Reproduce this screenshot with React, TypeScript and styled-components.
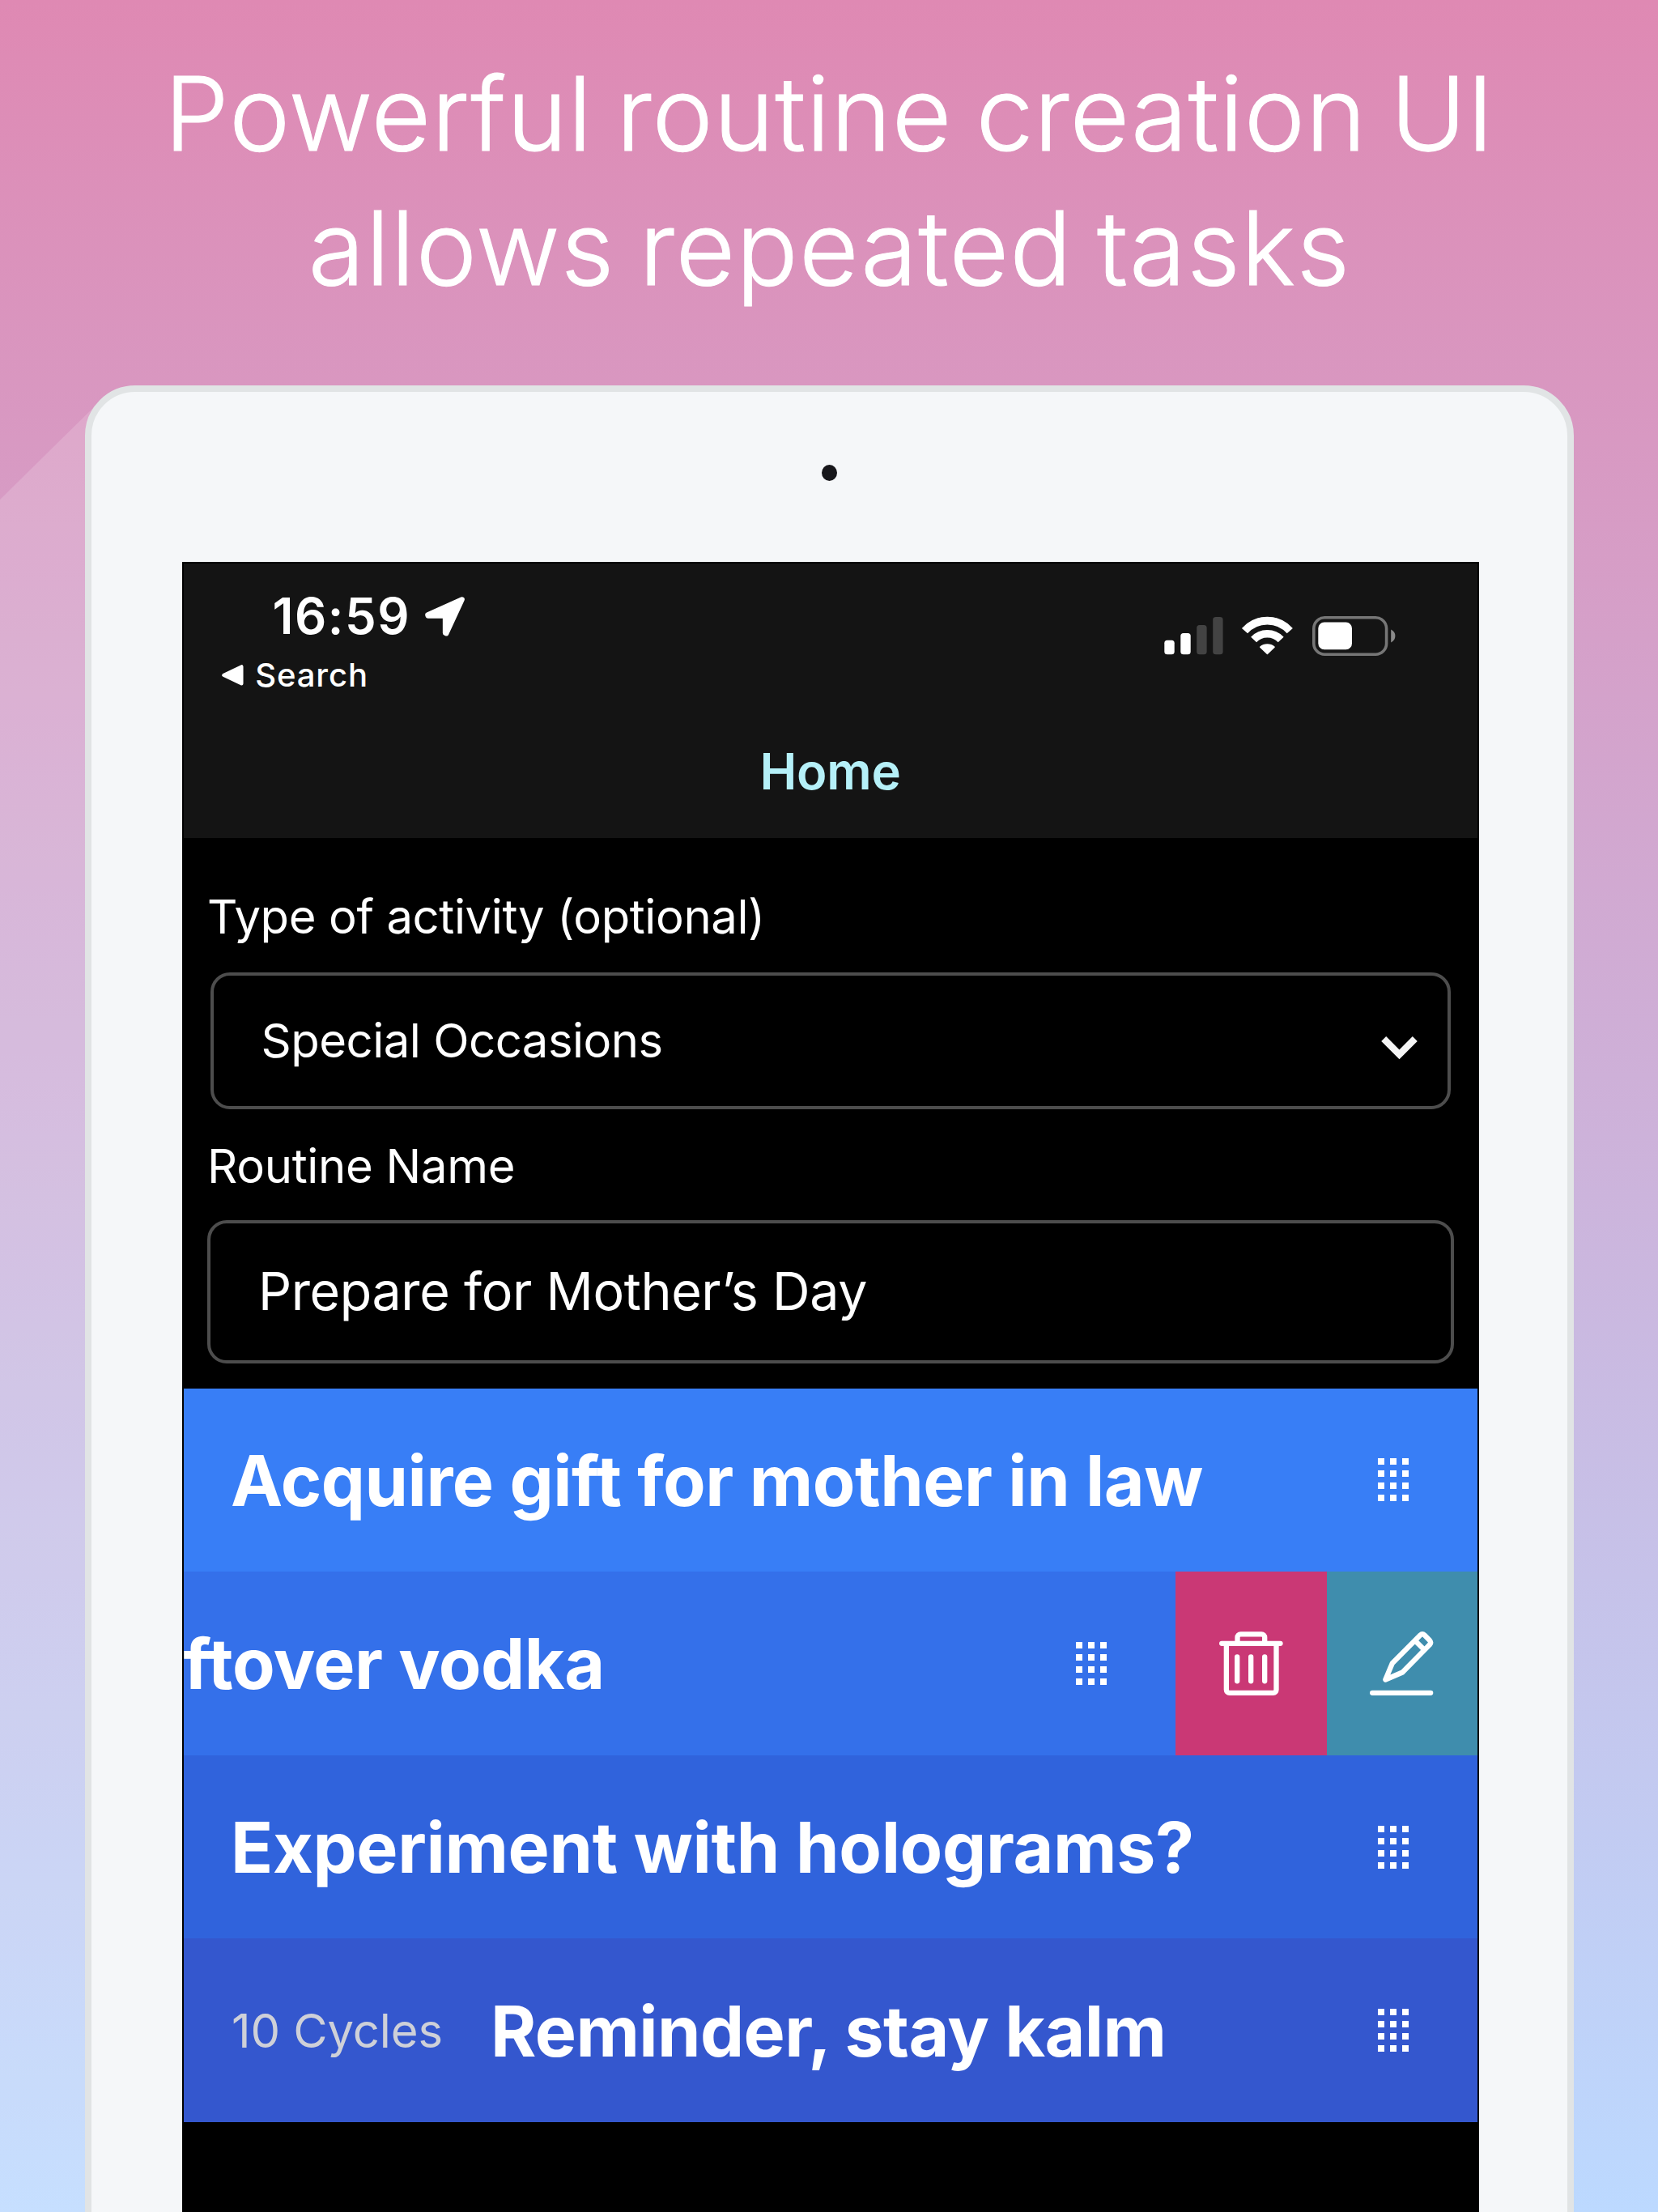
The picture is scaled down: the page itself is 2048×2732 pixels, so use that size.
import React from "react";
import styled, { createGlobalStyle } from "styled-components";

const GlobalStyle = createGlobalStyle`
  *, *::before, *::after { box-sizing: border-box; }
  html, body { margin: 0; padding: 0; background: #cdb2da; }
  body { font-family: Inter, Roboto, "Liberation Sans", sans-serif; }
`;

const Page = styled.main`
  position: relative;
  display: flex;
  flex-direction: column;
  align-items: center;
  width: 2048px;
  height: 2732px;
  padding-left: 1px;
  overflow: hidden;
  background: linear-gradient(180deg, #df89b3 0%, #bcd9ff 100%);
`;

const DeviceGlow = styled.div`
  position: absolute;
  inset: 0;
  background: rgba(255, 255, 255, 0.16);
  clip-path: polygon(130px 489px, 200px 600px, 200px 100%, 0 100%, 0 617px);
`;

const Headline = styled.h1`
  display: flex;
  flex-direction: column;
  align-items: center;
  flex: none;
  height: 476px;
  margin: 0;
  padding-top: 57px;
  color: #fff;
  font-size: 127px;
  font-weight: 300;
  -webkit-text-stroke: 1px #fff;
  line-height: 166px;
  white-space: nowrap;
`;

const HeadlineLine = styled.span<{ $tracking: number }>`
  display: block;
  letter-spacing: ${(p) => p.$tracking}px;
  word-spacing: -7px;
`;

const Device = styled.section`
  position: relative;
  display: flex;
  flex-direction: column;
  align-items: center;
  flex: none;
  width: 1839px;
  height: 2320px;
  border: 8px solid #e1e4e5;
  border-radius: 62px;
  background: #f5f7f9;
`;

const Camera = styled.div`
  flex: none;
  width: 19px;
  height: 20px;
  margin: 89.5px 0 100.5px;
  border-radius: 50%;
  background: #17171b;
`;

const Screen = styled.div`
  display: flex;
  flex-direction: column;
  flex: 1;
  width: 1602px;
  margin-left: 2px;
  border: 2px solid #000;
  background: #000;
  overflow: hidden;
`;

const NavHeader = styled.header`
  display: flex;
  flex-direction: column;
  flex: none;
  height: 339px;
  padding-top: 34px;
  background: #141414;
  color: #fff;
`;

const StatusBar = styled.div`
  display: flex;
  justify-content: space-between;
  height: 127.5px;
`;

const StatusLeft = styled.div`
  display: flex;
  flex-direction: column;
  gap: 17.5px;
`;

const ClockRow = styled.div`
  display: flex;
  align-items: flex-start;
  gap: 19px;
  height: 62px;
  padding-left: 110px;
`;

const Clock = styled.span`
  width: 169px;
  font-size: 61.5px;
  font-weight: 600;
  letter-spacing: 1.5px;
  line-height: 62px;
  white-space: nowrap;
`;

const BackLink = styled.div`
  display: flex;
  align-items: center;
  gap: 15px;
  height: 48px;
  padding-left: 47px;
  font-size: 40px;
  font-weight: 500;
  letter-spacing: 0.9px;
  line-height: 48px;
`;

const StatusRight = styled.div`
  display: flex;
  align-items: flex-start;
  padding: 30.5px 101px 0 0;
`;

const Glyph = styled.svg<{ $w: number; $h: number; $top?: number; $left?: number }>`
  display: block;
  flex: none;
  width: ${(p) => p.$w}px;
  height: ${(p) => p.$h}px;
  margin-top: ${(p) => p.$top ?? 0}px;
  margin-left: ${(p) => p.$left ?? 0}px;
  overflow: visible;
`;

const NavTitle = styled.div`
  margin-top: 64.5px;
  color: #b5f0f8;
  font-size: 61.5px;
  font-weight: 600;
  line-height: 62px;
  letter-spacing: -0.2px;
  text-align: center;
`;

const Form = styled.form`
  display: flex;
  flex-direction: column;
  flex: none;
  height: 679.6px;
  padding: 66.7px 29px 0 29.5px;
  color: #fff;
`;

const Label = styled.label<{ $gap: number; $tracking: number }>`
  height: 60px;
  margin-bottom: ${(p) => p.$gap}px;
  font-size: 58px;
  letter-spacing: ${(p) => p.$tracking}px;
  line-height: 60px;
`;

const Field = styled.div`
  display: flex;
  align-items: center;
  flex: none;
  border: 4px solid #4d4d4d;
  border-radius: 24px;
  white-space: nowrap;
`;

const SelectField = styled(Field)`
  justify-content: space-between;
  height: 169px;
  margin: 0 4px 40px 3.5px;
  padding: 0 37px 0 59px;
  font-size: 58px;
  letter-spacing: -0.5px;
`;

const TextField = styled(Field)`
  height: 177px;
  padding: 0 58px 0 59px;
  font-size: 64.5px;
  letter-spacing: -0.4px;
`;

const TaskList = styled.ul`
  flex: none;
  margin: 0;
  padding: 0;
  list-style: none;
`;

const TaskRow = styled.li<{ $color: string }>`
  display: flex;
  height: 226.6px;
  background: ${(p) => p.$color};
  color: #fff;
  overflow: hidden;
`;

const TaskBody = styled.div<{ $flush?: boolean }>`
  display: flex;
  align-items: center;
  flex: 1;
  padding: 0 85px 0 ${(p) => (p.$flush ? 0 : 58.5)}px;
`;

const TaskName = styled.span<{ $tracking: number }>`
  flex: 1;
  padding-top: 2px;
  font-size: 86px;
  font-weight: 700;
  letter-spacing: ${(p) => p.$tracking}px;
  line-height: 110px;
  white-space: nowrap;
`;

const Cycles = styled.span`
  width: 321px;
  padding-left: 1px;
  color: #ced0d8;
  font-size: 58px;
  letter-spacing: -0.1px;
  line-height: 70px;
  white-space: nowrap;
`;

const DragHandle = styled.div`
  display: grid;
  grid-template-columns: repeat(3, 8px);
  grid-auto-rows: 8px;
  gap: 7px;
`;

const Dot = styled.i`
  background: #fff;
`;

const Action = styled.button<{ $color: string; $width: number }>`
  display: flex;
  align-items: center;
  justify-content: center;
  flex: none;
  width: ${(p) => p.$width}px;
  padding: 0;
  border: 0;
  background: ${(p) => p.$color};
`;

const LocationArrow = () => (
  <Glyph $w={49} $h={48.3} $top={7.3} viewBox="795 52 147 145">
    <path
      d="M932 62 L805 119.500 L806 123 H870 V186 L874 188 Z"
      fill="#fff"
      stroke="#fff"
      strokeWidth="19"
      strokeLinejoin="round"
    />
  </Glyph>
);

const BackTriangle = () => (
  <Glyph $w={26.7} $h={25.7} viewBox="42 303 80 77">
    <path d="M49 341.500 L115 310 V373 Z" fill="#fff" stroke="#fff" strokeWidth="13" strokeLinejoin="round" />
  </Glyph>
);

const Signal = () => (
  <Glyph $w={73} $h={46.3} $top={1.5} viewBox="0 0 73 46.3">
    <rect x="0.3" y="28.7" width="12.4" height="17.6" rx="3.5" fill="#fff" />
    <rect x="20.3" y="20" width="12.4" height="26.3" rx="3.5" fill="#fff" />
    <rect x="40.2" y="10" width="12.4" height="36.3" rx="3.5" fill="#434343" />
    <rect x="60.2" y="0" width="12.4" height="46.3" rx="3.5" fill="#434343" />
  </Glyph>
);

const Wifi = () => (
  <Glyph $w={62.8} $h={46.3} $top={1.5} $left={23.7} viewBox="0 0 62.8 46.3">
    <g fill="none" stroke="#fff" strokeWidth="9.6">
      <path d="M3.500 17.100 A37.500 37.500 0 0 1 59.300 17.100" />
      <path d="M14.600 28 A23.200 23.200 0 0 1 48.200 28" />
    </g>
    <path
      d="M22.800 37.200 A13.500 13.500 0 0 1 40 37.200 L31.400 45.300 Z"
      fill="#fff"
      stroke="#fff"
      strokeWidth="1.6"
      strokeLinejoin="round"
    />
  </Glyph>
);

const Battery = () => (
  <Glyph $w={102.4} $h={49} $left={24.1} viewBox="0 0 102.4 49">
    <rect x="1.800" y="1.800" width="89.800" height="45.400" rx="13.500" fill="none" stroke="#767676" strokeWidth="3.600" />
    <rect x="7.300" y="7.600" width="41.700" height="33.700" rx="7.500" fill="#fff" />
    <path d="M97.200 16.600 Q102.400 19 102.400 24.500 Q102.400 30 97.200 32.600 Z" fill="#8a8a8a" />
  </Glyph>
);

const Chevron = () => (
  <Glyph $w={45} $h={28} $top={17} viewBox="0 0 45 28">
    <path d="M3.200 3 L22.500 22.400 L41.800 3" fill="none" stroke="#f5f5f5" strokeWidth="8.400" />
  </Glyph>
);

const Trash = () => (
  <Glyph $w={78.7} $h={79.3} viewBox="199 104 236 238">
    <g fill="none" stroke="#fff" strokeWidth="19" strokeLinecap="round" strokeLinejoin="round">
      <path d="M208.500 148.500 H425.500" />
      <path d="M266.500 145 V126 a12 12 0 0 1 12 -12 H355.500 a12 12 0 0 1 12 12 V145" />
      <path d="M225.500 150 V320 a11.500 11.500 0 0 0 11.500 11.500 H399 a11.500 11.500 0 0 0 11.500 -11.500 V150" />
      <path d="M265.500 198 V288 M316.500 198 V288 M367.500 198 V288" />
    </g>
  </Glyph>
);

const Pencil = () => (
  <Glyph $w={78.3} $h={79.3} viewBox="760 104 235 238">
    <g fill="none" stroke="#fff" strokeWidth="19" strokeLinejoin="round">
      <path d="M769.500 331.500 H985.500" strokeLinecap="round" />
      <path d="M818 282.500 L843.500 222 L947 117.500 Q955 110 963 117.500 L982 137 Q989 145 982 153 L881 255.500 Z" />
      <path d="M929 139 L961 171" />
    </g>
  </Glyph>
);

const Handle = () => (
  <DragHandle>
    {Array.from({ length: 12 }, (_, i) => (
      <Dot key={i} />
    ))}
  </DragHandle>
);

type Task = {
  name: string;
  color: string;
  tracking: number;
  cycles?: string;
  swiped?: boolean;
};

const tasks: Task[] = [
  { name: "Acquire gift for mother in law", color: "#387ef6", tracking: -0.5 },
  { name: "ftover vodka", color: "#3470ea", tracking: -0.5, swiped: true },
  { name: "Experiment with holograms?", color: "#3063dc", tracking: -0.35 },
  { name: "Reminder, stay kalm", color: "#3457ce", tracking: -0.6, cycles: "10 Cycles" },
];

export default function App() {
  return (
    <Page>
      <GlobalStyle />
      <DeviceGlow />
      <Headline>
        <HeadlineLine $tracking={0.75}>Powerful routine creation UI</HeadlineLine>
        <HeadlineLine $tracking={1.3}>allows repeated tasks</HeadlineLine>
      </Headline>
      <Device>
        <Camera />
        <Screen>
          <NavHeader>
            <StatusBar>
              <StatusLeft>
                <ClockRow>
                  <Clock>16:59</Clock>
                  <LocationArrow />
                </ClockRow>
                <BackLink>
                  <BackTriangle />
                  Search
                </BackLink>
              </StatusLeft>
              <StatusRight>
                <Signal />
                <Wifi />
                <Battery />
              </StatusRight>
            </StatusBar>
            <NavTitle>Home</NavTitle>
          </NavHeader>
          <Form>
            <Label $gap={39.3} $tracking={-0.4}>Type of activity (optional)</Label>
            <SelectField>
              Special Occasions
              <Chevron />
            </SelectField>
            <Label $gap={37} $tracking={-0.3}>Routine Name</Label>
            <TextField>Prepare for Mother’s Day</TextField>
          </Form>
          <TaskList>
            {tasks.map((task) => (
              <TaskRow key={task.name} $color={task.color}>
                <TaskBody $flush={task.swiped}>
                  {task.cycles && <Cycles>{task.cycles}</Cycles>}
                  <TaskName $tracking={task.tracking}>{task.name}</TaskName>
                  <Handle />
                </TaskBody>
                {task.swiped && (
                  <>
                    <Action $color="#ca3875" $width={187} aria-label="Delete">
                      <Trash />
                    </Action>
                    <Action $color="#3f8dad" $width={186} aria-label="Edit">
                      <Pencil />
                    </Action>
                  </>
                )}
              </TaskRow>
            ))}
          </TaskList>
        </Screen>
      </Device>
    </Page>
  );
}
